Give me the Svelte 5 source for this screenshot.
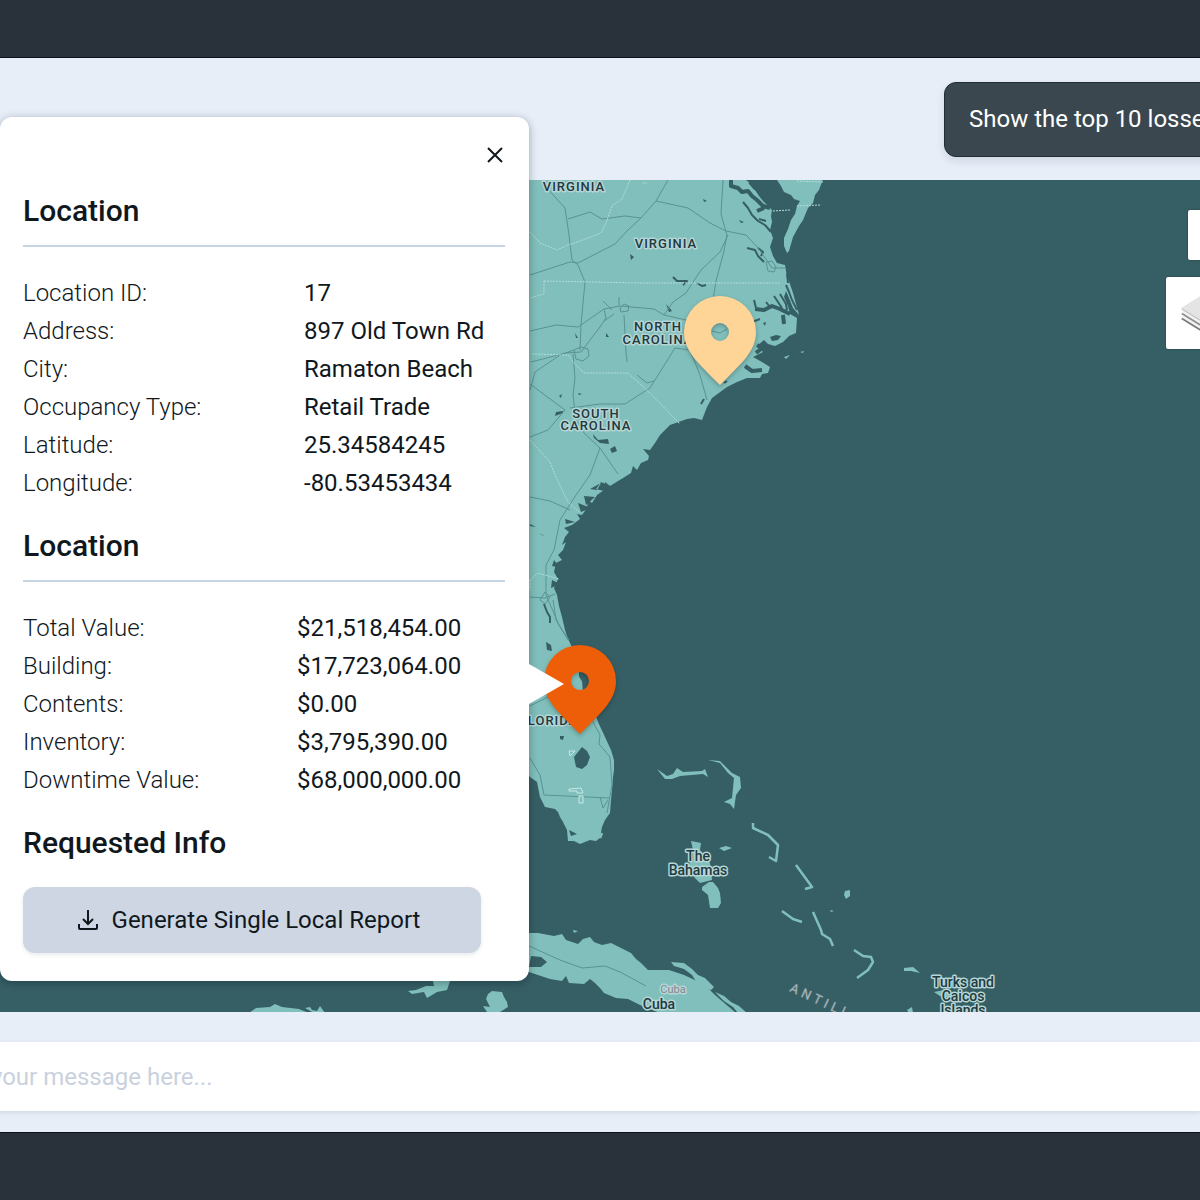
<script>
	let message = $state("");
	let panelOpen = $state(true);

	const details = [
		["Location ID:", "17"],
		["Address:", "897 Old Town Rd"],
		["City:", "Ramaton Beach"],
		["Occupancy Type:", "Retail Trade"],
		["Latitude:", "25.34584245"],
		["Longitude:", "-80.53453434"],
	];

	const values = [
		["Total Value:", "$21,518,454.00"],
		["Building:", "$17,723,064.00"],
		["Contents:", "$0.00"],
		["Inventory:", "$3,795,390.00"],
		["Downtime Value:", "$68,000,000.00"],
	];

	const pins = [
		{ x: 720, y: 332, color: "#ffd597" },
		{ x: 580, y: 681, color: "#ee5d08" },
	];

	const land = [
		// mainland
		"M500 180H746L751 184 755 190 759 196 763 201 767 205 772 210 771 216 772 222 770 230 773 238 770 247 773 256 777 263 785 265 787 277 790 284 793 293 796 304 799 315 793 308 789 298 786 291 784 297 788 306 790 314 797 318 796 333 789 336 783 342 775 346 768 344 764 340 757 346 763 352 753 357 762 362 770 367 768 373 762 374 760 378 747 378 737 382 727 387 712 398 707 407 702 420 694 418 687 419 670 425 660 435 655 443 650 450 643 449 649 456 648 460 641 463 637 470 633 466 631 473 623 478 610 486 605 482 604 490 597 495 592 503 588 500 587 508 582 515 577 514 580 519 572 525 564 528 569 532 565 537 562 545 566 542 563 550 558 555 562 560 556 563 554 572 558 579 554 588 557 595 559 606 562 617 565 630 568 639 572 647 598 722 605 737 611 750 614 760 614 770 613 777 612 790 611 800 610 813 605 820 602 827 600 838 596 841 590 840 580 844 574 841 568 841 567 830 563 822 560 817 558 812 555 809 545 807 540 797 537 782 530 777 500 740Z",
		// eastern shore
		"M823 179L819 190 815 195 813 203 808 208 803 220 799 226 793 237 789 251 787 253 784 246 784 238 788 229 791 220 795 214 797 206 800 201 794 199 791 195 784 192 781 186 777 180Z",
		// cuba and its cays
		"M500 930L529 933 538 933 554 936 562 934 566 940 578 944 583 939 590 937 594 942 602 945 611 943 619 947 631 953 636 959 641 963 648 970 669 970 684 975 697 981 705 985 715 995 729 1007 736 1013H660L650 1009 640 1005 628 999 616 998 604 993 600 988 595 983 590 979 584 984 569 983 566 976 562 981 550 979 529 972 500 970Z",
		"M671 962L684 963 692 969 698 975 705 978 714 987 711 990 705 988 697 983 692 975 684 969 674 966Z",
		"M715 992L724 996 731 1002 739 1006 747 1013H738L733 1007 724 1001Z",
		"M433 981H450L447 990 437 992 427 998 424 992 412 994 408 991 416 990 426 986 434 986Z",
		"M492 991L502 992 504 997 507 1002 508 1007 500 1012H487L483 1006 490 1007 486 999 488 994Z",
		"M249 1013L256 1008 270 1007 275 1004 282 1007 299 1009 309 1013Z",
		"M305 1008L310 1007 312 1010 317 1011 320 1006 325 1013H314Z",
		// bahamas
		"M657 769L667 776 673 774 677 768 683 772 702 771 705 769 708 777 703 774 680 776 672 779 665 779Z",
		"M708 760L720 761 732 773 740 777 741 788 736 795 734 809 730 804 724 802 732 798 734 778 728 773 720 763Z",
		"M691 841L701 843 700 850 710 863 712 880 700 883 690 873 685 868 693 860 693 850Z",
		"M702 887L709 882 713 882 718 888 720 893 721 903 718 908H710L708 895 702 890Z",
		"M719 848L726 846 732 848 724 851Z",
		"M845 891L850 890 850 896 846 899 844 895Z",
		"M830 910L834 911 831 912Z",
		"M904 968L913 967 920 973 911 971 904 971Z",
		"M907 1010L912 1007 913 1013H909Z",
		"M934 992L944 990 953 999 940 996Z",
		"M784 357L790 355 786 359Z",
		"M800 352L804 351 803 353Z",
		"M573 930L578 931 574 933Z",
	];

	const cays =
		"M753 823V828L768 835 778 845 776 861 769 857M796 865L812 887 805 889M782 911L793 919 802 922M813 912L821 930 822 934 830 939 833 946M854 950L863 956 871 957 873 962 868 970 857 978M600 838L602 833";

	const lakes = [
		"M593 434L598 440 608 439 609 444 600 443 594 438Z",
		"M610 449L615 446 617 451 612 453Z",
		"M556 412L563 411 563 413 555 416ZM559 396L562 394 561 398ZM578 393L582 394 579 395Z",
		"M596 489L604 491 610 486 601 482ZM601 483L597 490 590 489ZM584 496L595 497 586 505ZM578 503L591 508 581 512Z",
		"M565 519L575 522 566 524ZM554 560L560 568 552 566ZM552 580L560 584 551 588Z",
		"M546 642L551 645 552 651 547 650Z",
		"M582 747L587 751 590 757 587 765 582 769 576 767 574 757Z",
		"M560 736L564 736 563 740 560 739Z",
		"M569 830L577 834 571 836ZM630 254L634 257 631 260ZM703 199L707 201 704 202Z",
		"M575 333L578 338 576 338ZM606 333L609 337 606 337Z",
		"M770 337L776 335 781 336 778 340 772 341Z",
		"M763 323L766 322 765 326ZM530 524L536 527 530 526ZM539 533L545 536 542 535Z",
		"M531 956L541 957 547 962 541 967 529 967Z",
		"M666 304L672 311 669 312ZM739 220L744 222 741 223Z",
	];

	const wideRivers =
		"M731 180V186L738 188 742 192 748 191 752 196 757 200 763 206 770 208M750 182L755 188 760 190M757 211L764 208M755 309L764 310 772 306 780 309 790 314M783 315L784 324M757 345L762 348 756 353M745 366L752 371 762 370M581 670V676L584 681 585 692";

	const rivers =
		"M743 202L748 208 752 215 758 221 765 225 771 232M759 219L766 221M747 248L755 250 758 256 764 262M758 248L763 252 761 256M754 300L756 308M766 302L770 307M774 296L778 302 782 308M780 294L786 304 787 310M786 285L789 292 792 300 797 310M787 274L788 283M752 322L760 319M673 277L677 281 687 281 683 285M697 283L702 286 706 285M544 604L547 612 550 617 550 623M701 404L704 399M724 383L727 381";

	const roads =
		"M545 186L565 208 569 235 572 260 578 265 585 282 581 325 580 350M530 275L570 262 578 263 615 244 627 231 641 218 656 201 668 180M568 219L590 212 602 219 625 216 641 218M656 201L688 208 710 223 726 231 746 235 758 248 768 262 772 268H785M723 180L721 214 727 235 724 251 716 281 713 300M728 235L720 252 701 270 686 293 673 302 664 315M766 262L772 261 776 267 774 272 768 271ZM530 331L556 325 578 327 604 309 620 306 654 309 664 315 686 320M620 308L624 304 629 306 628 311 621 312ZM603 301L612 310M604 321L614 314M604 309L606 318 600 327 581 352 566 353 531 362M624 315L626 352 627 362M619 297V305M530 390L535 372 560 355 574 350 581 347 588 349 589 356 583 361 576 359 574 350M573 354L575 378 573 395 576 420 584 433 600 448 618 474M530 384L565 410 548 430 530 437M570 408L600 404 625 404 650 388 675 348 690 350 700 375 707 400M637 375L647 383 654 381M600 448L590 475 576 495 560 520 554 550 546 565 546 595 559 625 569 640M530 497L550 501 570 510M530 597L545 598 555 594M545 592L550 597 545 604 540 600ZM530 706L548 697M530 758L540 775 544 795 609 798M592 720L600 735 599 744 610 757 612 785 607 813M600 797L603 808 608 800M553 600L556 620 568 640M712 331L720 333 727 329";

	const borders =
		"M630 180L622 199 612 206 606 223 601 233 580 241 568 245 557 250 540 243 530 232M544 281L640 283 780 283M544 281V294L530 298M532 354L568 355 574 363 584 373 628 373 650 393 680 424M530 440L550 462 555 475 568 502 580 513M530 580L538 573 559 579M530 580V590M773 211L790 210M797 206L820 205M797 181L823 182M643 183L647 183";

	const labels = [
		{ x: 574, lines: [["VIRGINIA", 191]], kind: "state" },
		{ x: 666, lines: [["VIRGINIA", 248]], kind: "state" },
		{ x: 658, lines: [["NORTH", 331], ["CAROLINA", 344]], kind: "state" },
		{ x: 596, lines: [["SOUTH", 418], ["CAROLINA", 430]], kind: "state" },
		{ x: 549, lines: [["FLORIDA", 725]], kind: "state" },
		{ x: 698, lines: [["The", 861], ["Bahamas", 875]], kind: "country" },
		{ x: 659, lines: [["Cuba", 1009]], kind: "country" },
		{ x: 673, lines: [["Cuba", 993]], kind: "island" },
		{
			x: 963,
			lines: [["Turks and", 987], ["Caicos", 1001], ["Islands", 1015]],
			kind: "country",
		},
	];

	function pinPath(x, y) {
		return `M${x - 36} ${y}a36 36 0 0 1 72 0c0 19-14 31-36 53c-22-22-36-34-36-53zm27 0a9 9 0 1 0 18 0a9 9 0 1 0-18 0z`;
	}

	function closePanel() {
		panelOpen = false;
	}

	function send(e) {
		e.preventDefault();
		message = "";
	}
</script>

<div class="app">
	<header class="topbar"></header>

	<main>
		<div class="chat">
			<p class="bubble">Show the top 10 losses</p>
		</div>

		<section class="map-area">
			<svg
				class="map"
				viewBox="0 180 1200 832"
				preserveAspectRatio="xMinYMin slice"
				role="img"
				aria-label="Map of locations"
			>
				{#each land as d}
					<path class="land" {d} />
				{/each}
				<path class="cays" d={cays} />
				{#each lakes as d}
					<path class="water" {d} />
				{/each}
				<path class="river wide" d={wideRivers} />
				<path class="river" d={rivers} />
				<path class="road" d={roads} />
				<path class="road" d="M529 946L560 960 582 968 605 966 620 972 635 980 646 986" />
				<path class="border" d={borders} />
				<path
					class="reserve"
					d="M569 751H575L570 756ZM569 789L581 788 583 793H577V791H569ZM579 796H583V803H579Z"
				/>

				{#each labels as label}
					{#each label.lines as [text, y]}
						<text class={label.kind} x={label.x} {y}>{text}</text>
					{/each}
				{/each}
				<text class="sea" x="789" y="991" transform="rotate(25 789 991)">ANTILL</text>

				{#each pins as pin}
					<path class="pin" d={pinPath(pin.x, pin.y)} fill={pin.color} />
				{/each}
			</svg>

			<div class="controls">
				<button class="control" aria-label="Zoom"></button>
				<button class="control layers" aria-label="Layers">
					<svg viewBox="0 0 48 48" width="48" height="48">
						<path d="M3 30L24 43 45 30 24 17Z" fill="#777" />
						<path d="M3 28L24 41 45 28 24 15Z" fill="#f2f2f2" />
						<path d="M3 25L24 38 45 25 24 12Z" fill="#8d8d8d" />
						<path d="M3 23L24 36 45 23 24 10Z" fill="#f2f2f2" />
						<path d="M3 20L24 33 45 20 24 7Z" fill="#b5b5b5" />
						<path d="M3 19L24 32 45 19 24 6Z" fill="#e4e4e4" />
					</svg>
				</button>
			</div>

			{#if panelOpen}
				<aside class="panel">
					<button class="close" aria-label="Close" onclick={closePanel}>
						<svg viewBox="0 0 24 24" width="24" height="24">
							<path d="M5 5L19 19M19 5L5 19" />
						</svg>
					</button>

					<h2 class="ruled">Location</h2>
					<dl>
						{#each details as [name, value]}
							<dt>{name}</dt>
							<dd>{value}</dd>
						{/each}
					</dl>

					<h2 class="ruled">Location</h2>
					<dl class="amounts">
						{#each values as [name, value]}
							<dt>{name}</dt>
							<dd>{value}</dd>
						{/each}
					</dl>

					<h2>Requested Info</h2>
					<button class="report">
						<svg viewBox="0 0 24 24" width="24" height="24">
							<path d="M12 2V15M7 11L12 16L17 11M3 16V20Q3 21 4 21H20Q21 21 21 20V16" />
						</svg>
						Generate Single Local Report
					</button>
				</aside>
			{/if}
		</section>

		<form class="composer" onsubmit={send}>
			<input
				type="text"
				aria-label="Message"
				placeholder="Type your message here..."
				bind:value={message}
			/>
		</form>
	</main>

	<footer class="bottombar"></footer>
</div>

<style>
	:global(body) {
		margin: 0;
		background: #29323a;
	}

	.app {
		display: flex;
		flex-direction: column;
		min-height: 100vh;
		overflow: hidden;
		font-family: Roboto, "Open Sans", sans-serif;
		font-size: 24px;
		color: #10181d;
		background: #e7eef8;
	}

	button,
	input {
		font: inherit;
		color: inherit;
		border: 0;
	}

	.topbar {
		height: 57px;
		background: #29323a;
		border-bottom: 1px solid #0c141a;
	}

	.bottombar {
		flex: 1;
		min-height: 67px;
		background: #29323a;
		border-top: 1px solid #0c141a;
	}

	.chat {
		display: flex;
		justify-content: flex-end;
		padding: 24px 0 23px;
	}

	.bubble {
		box-sizing: border-box;
		width: 296px;
		margin: 0 -40px 0 0;
		padding: 23px 24px;
		line-height: 27px;
		white-space: nowrap;
		color: #fff;
		background: #3a474f;
		border: 1px solid #1f2d35;
		border-radius: 12px;
		box-shadow: 0 4px 8px rgba(30, 50, 70, 0.12);
	}

	.map-area {
		position: relative;
		min-height: 600px;
		padding-bottom: 31px;
		background: #365f65;
	}

	.map {
		position: absolute;
		inset: 0;
		width: 100%;
		height: 100%;
	}

	.land {
		fill: #80bfbb;
	}

	.water {
		fill: #365f65;
	}

	.river {
		fill: none;
		stroke: #365f65;
		stroke-width: 2;
		stroke-linejoin: round;
	}

	.wide {
		stroke-width: 4;
	}

	.cays {
		fill: none;
		stroke: #80bfbb;
		stroke-width: 2.5;
		stroke-linejoin: round;
	}

	.road {
		fill: none;
		stroke: #5b9295;
		stroke-width: 1;
		stroke-linejoin: round;
	}

	.border {
		fill: none;
		stroke: #b4dcd9;
		stroke-width: 1;
		stroke-dasharray: 2 1;
	}

	.reserve {
		fill: #80bfbb;
		stroke: #c9e8e6;
		stroke-width: 1;
	}

	.map text {
		text-anchor: middle;
		paint-order: stroke;
		stroke: #b5d6d5;
		stroke-width: 3px;
		stroke-linejoin: round;
		fill: #22393f;
		font-weight: 500;
	}

	.map .state {
		font-size: 13px;
		letter-spacing: 1px;
	}

	.map .country {
		font-size: 14px;
	}

	.map .island {
		font-size: 11px;
		font-weight: 400;
		fill: #83868f;
	}

	.map .sea {
		text-anchor: start;
		font-size: 13px;
		font-weight: 400;
		letter-spacing: 4px;
		stroke-width: 1px;
		stroke: #56777c;
		fill: #a9b3b8;
	}

	.pin {
		filter: drop-shadow(0 2px 2px rgba(0, 0, 0, 0.25));
	}

	.controls {
		position: absolute;
		top: 30px;
		right: -38px;
		display: flex;
		flex-direction: column;
		align-items: flex-end;
		gap: 17px;
	}

	.control {
		width: 50px;
		height: 50px;
		padding: 0;
		background: #fff;
		border-radius: 2px;
		box-shadow: 0 0 2px rgba(0, 0, 0, 0.4);
	}

	.layers {
		display: grid;
		place-items: center;
		width: 72px;
		height: 72px;
	}

	.panel {
		position: relative;
		top: -63px;
		display: flex;
		flex-direction: column;
		box-sizing: border-box;
		width: 529px;
		max-width: 100%;
		margin-bottom: -63px;
		padding: 26px 24px 28px 23px;
		background: #fff;
		border-radius: 12px;
		box-shadow: 0 2px 8px rgba(0, 20, 30, 0.35);
	}

	/* arrow towards the selected pin */
	.panel::after {
		content: "";
		position: absolute;
		top: 547px;
		left: 100%;
		border: solid transparent;
		border-width: 20px 0 20px 35px;
		border-left-color: #fff;
	}

	.close {
		align-self: flex-end;
		width: 24px;
		height: 24px;
		margin-right: -2px;
		padding: 0;
		background: none;
	}

	.close svg,
	.report svg {
		display: block;
		fill: none;
		stroke: #10181d;
		stroke-width: 2;
	}

	h2 {
		margin: 26px 0 0;
		font-size: 30px;
		line-height: 36px;
		font-weight: 500;
	}

	.ruled {
		padding-bottom: 16px;
		border-bottom: 2px solid #c6d5e3;
	}

	dl {
		display: grid;
		grid-template-columns: 281px 1fr;
		margin: 27px 0 0;
		line-height: 38px;
	}

	.amounts {
		grid-template-columns: 274px 1fr;
	}

	dt {
		font-weight: 300;
	}

	dd {
		margin: 0;
		font-weight: 400;
	}

	.report {
		display: flex;
		align-items: center;
		justify-content: center;
		gap: 12px;
		height: 66px;
		margin: 26px 24px 0 0;
		padding: 0 8px 0 0;
		background: #cdd6e2;
		border-radius: 12px;
		box-shadow: 0 2px 4px rgba(30, 50, 70, 0.1);
	}

	.composer {
		display: flex;
		margin: 30px 0 21px -90px;
	}

	.composer input {
		flex: 1;
		min-width: 0;
		height: 69px;
		padding: 0 24px;
		background: #fff;
		box-shadow: 0 2px 4px rgba(30, 50, 70, 0.1);
	}

	.composer input::placeholder {
		color: #c9d1de;
		opacity: 1;
	}
</style>
